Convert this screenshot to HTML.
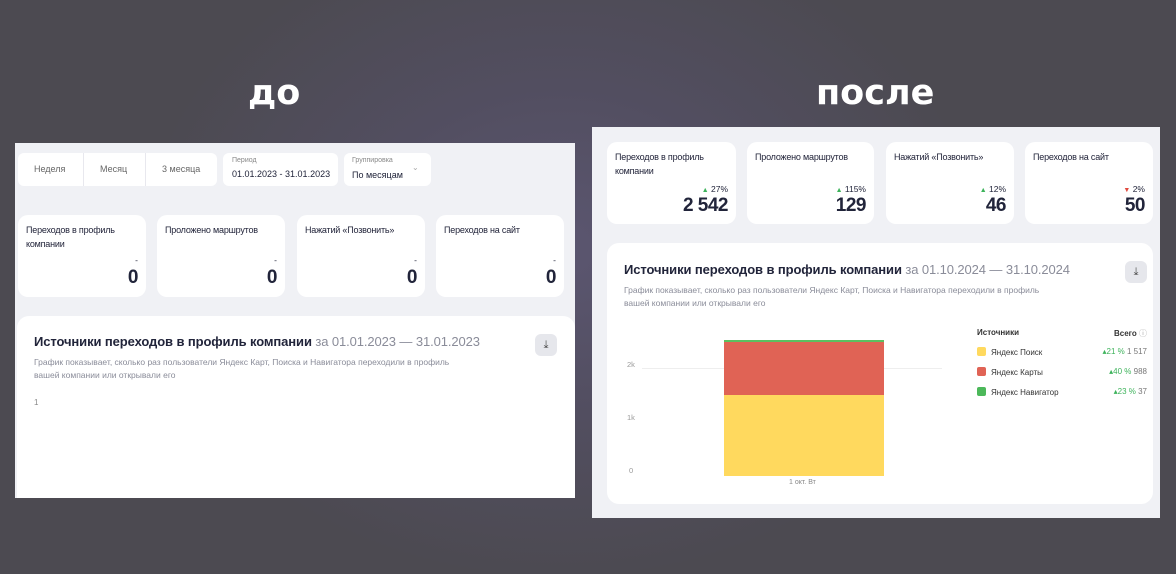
<!DOCTYPE html>
<html><head><meta charset="utf-8"><style>
*{margin:0;padding:0;box-sizing:border-box}
body{width:1176px;height:574px;overflow:hidden;position:relative;font-family:"Liberation Sans","DejaVu Sans",sans-serif;color:#21243a;
background:radial-gradient(ellipse 420px 330px at 560px 250px,#5b5670 0%,#524e60 50%,rgba(78,75,85,0) 100%),#4c4a51;}
.a{position:absolute}
.h{position:absolute;color:#fff;font-family:"DejaVu Sans",sans-serif;font-weight:bold;font-size:35px;top:73px}
.panel{position:absolute;background:#f0f1f5}
.w{position:absolute;background:#fff;border-radius:10px}
.lbl{font-size:9px;line-height:14px;color:#22243a;position:absolute;left:8px;top:8px;letter-spacing:-0.2px}
.num{position:absolute;right:8px;font-weight:bold;font-size:19px;letter-spacing:-0.5px}
.pct{position:absolute;right:8px;font-size:8.5px}
.up{color:#3db35b;font-size:7px}
.dn{color:#e04a3e;font-size:7px}
.t{font-size:13px;font-weight:bold;position:absolute;white-space:nowrap;letter-spacing:-0.1px}
.t span{font-weight:normal;color:#8a8c99}
.s{font-size:8.5px;color:#8a8c99;line-height:13px;position:absolute;width:425px}
.dl{position:absolute;width:22px;height:22px;border-radius:6px;background:#e6e7ec;text-align:center;font-size:11px;line-height:22px;color:#444}
.lg{position:absolute;font-size:8px;color:#333}
.cb{display:inline-block;width:9px;height:9px;border-radius:2px;vertical-align:-1px;margin-right:5px}
</style></head><body>
<div class="h" style="left:248px">до</div>
<div class="h" style="left:816px">после</div>

<div class="panel" style="left:15px;top:143px;width:560px;height:355px">
 <div class="w" style="left:3px;top:10px;width:199px;height:33px;border-radius:6px"></div>
 <div class="a" style="left:68px;top:10px;width:1px;height:33px;background:#e8e8ee"></div>
 <div class="a" style="left:130px;top:10px;width:1px;height:33px;background:#e8e8ee"></div>
 <div class="a" style="left:19px;top:21px;font-size:9px;color:#666">Неделя</div>
 <div class="a" style="left:85px;top:21px;font-size:9px;color:#666">Месяц</div>
 <div class="a" style="left:147px;top:21px;font-size:9px;color:#666">3 месяца</div>
 <div class="w" style="left:208px;top:10px;width:115px;height:33px;border-radius:6px"></div>
 <div class="a" style="left:217px;top:14px;font-size:7px;color:#888">Период</div>
 <div class="a" style="left:217px;top:26px;font-size:9px">01.01.2023 - 31.01.2023</div>
 <div class="w" style="left:329px;top:10px;width:87px;height:33px;border-radius:6px"></div>
 <div class="a" style="left:337px;top:14px;font-size:7px;color:#888">Группировка</div>
 <div class="a" style="left:337px;top:27px;font-size:9px">По месяцам</div>
 <div class="a" style="left:397px;top:20px;font-size:8px;color:#aaa">⌄</div>

 <div class="w" style="left:3px;top:72px;width:128px;height:82px"><div class="lbl">Переходов в профиль<br>компании</div><div class="pct" style="top:40px">-</div><div class="num" style="top:52px">0</div></div>
 <div class="w" style="left:142px;top:72px;width:128px;height:82px"><div class="lbl">Проложено маршрутов</div><div class="pct" style="top:40px">-</div><div class="num" style="top:52px">0</div></div>
 <div class="w" style="left:282px;top:72px;width:128px;height:82px"><div class="lbl">Нажатий «Позвонить»</div><div class="pct" style="top:40px">-</div><div class="num" style="top:52px">0</div></div>
 <div class="w" style="left:421px;top:72px;width:128px;height:82px"><div class="lbl">Переходов на сайт</div><div class="pct" style="top:40px">-</div><div class="num" style="top:52px">0</div></div>

 <div class="w" style="left:2px;top:173px;width:558px;height:182px;border-radius:12px 12px 0 0">
  <div class="t" style="left:17px;top:18px">Источники переходов в профиль компании <span>за 01.01.2023 — 31.01.2023</span></div>
  <div class="s" style="left:17px;top:40px">График показывает, сколько раз пользователи Яндекс Карт, Поиска и Навигатора переходили в профиль вашей компании или открывали его</div>
  <div class="a" style="left:17px;top:82px;font-size:8px;color:#888">1</div>
  <div class="dl" style="left:518px;top:18px">⤓</div>
 </div>
</div>

<div class="panel" style="left:592px;top:127px;width:568px;height:391px">
 <div class="w" style="left:15px;top:15px;width:129px;height:82px"><div class="lbl">Переходов в профиль<br>компании</div><div class="pct" style="top:42px"><span class="up">▲</span> 27%</div><div class="num" style="top:53px">2 542</div></div>
 <div class="w" style="left:155px;top:15px;width:127px;height:82px"><div class="lbl">Проложено маршрутов</div><div class="pct" style="top:42px"><span class="up">▲</span> 115%</div><div class="num" style="top:53px">129</div></div>
 <div class="w" style="left:294px;top:15px;width:128px;height:82px"><div class="lbl">Нажатий «Позвонить»</div><div class="pct" style="top:42px"><span class="up">▲</span> 12%</div><div class="num" style="top:53px">46</div></div>
 <div class="w" style="left:433px;top:15px;width:128px;height:82px"><div class="lbl">Переходов на сайт</div><div class="pct" style="top:42px"><span class="dn">▼</span> 2%</div><div class="num" style="top:53px">50</div></div>

 <div class="w" style="left:15px;top:116px;width:546px;height:261px;border-radius:12px">
  <div class="t" style="left:17px;top:19px">Источники переходов в профиль компании <span>за 01.10.2024 — 31.10.2024</span></div>
  <div class="s" style="left:17px;top:41px">График показывает, сколько раз пользователи Яндекс Карт, Поиска и Навигатора переходили в профиль вашей компании или открывали его</div>
  <div class="dl" style="left:518px;top:18px">⤓</div>
  <div class="a" style="left:20px;top:117px;font-size:7.5px;color:#999">2k</div>
  <div class="a" style="left:20px;top:170px;font-size:7.5px;color:#999">1k</div>
  <div class="a" style="left:22px;top:223px;font-size:7.5px;color:#999">0</div>
  <div class="a" style="left:35px;top:125px;width:300px;height:1px;background:#eee"></div>
  <div class="a" style="left:117px;top:97px;width:160px;height:2px;background:#5cc060"></div>
  <div class="a" style="left:117px;top:99px;width:160px;height:53px;background:#e06355"></div>
  <div class="a" style="left:117px;top:152px;width:160px;height:81px;background:#ffd95e"></div>
  <div class="a" style="left:182px;top:236px;font-size:7px;color:#888">1 окт. Вт</div>
  <div class="lg" style="left:370px;top:85px;font-weight:bold">Источники</div>
  <div class="lg" style="left:507px;top:85px;font-weight:bold">Всего <span style="color:#aaa;font-weight:normal">ⓘ</span></div>
  <div class="lg" style="left:370px;top:104px"><span class="cb" style="background:#ffd95e"></span>Яндекс Поиск</div>
  <div class="lg" style="right:6px;top:104px"><span style="color:#3db35b">▴21 %</span> <span style="color:#777">1 517</span></div>
  <div class="lg" style="left:370px;top:124px"><span class="cb" style="background:#e06355"></span>Яндекс Карты</div>
  <div class="lg" style="right:6px;top:124px"><span style="color:#3db35b">▴40 %</span> <span style="color:#777">988</span></div>
  <div class="lg" style="left:370px;top:144px"><span class="cb" style="background:#4cb85a"></span>Яндекс Навигатор</div>
  <div class="lg" style="right:6px;top:144px"><span style="color:#3db35b">▴23 %</span> <span style="color:#777">37</span></div>
 </div>
</div>
</body></html>
